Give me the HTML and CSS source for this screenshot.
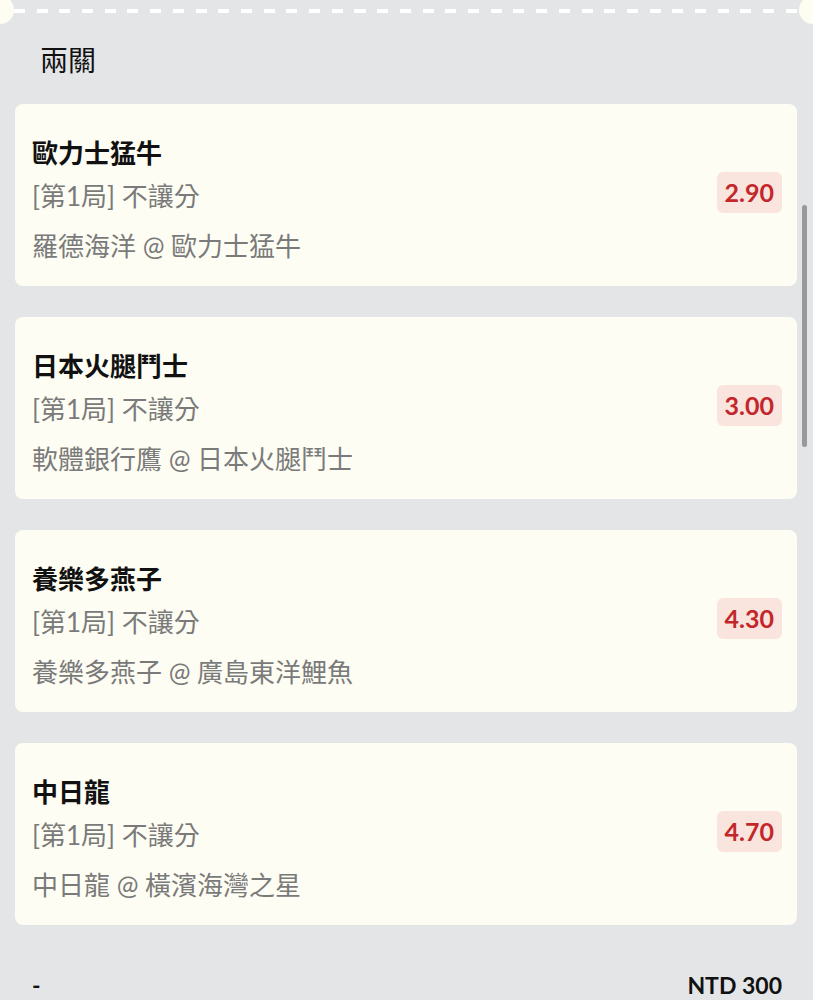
FILE: index.html
```html
<!DOCTYPE html>
<html lang="zh-Hant">
<head>
  <meta charset="UTF-8">
  <meta name="viewport" content="width=device-width, initial-scale=1.0">
  <title>投注單</title>
  <link rel="stylesheet" href="styles.css">
</head>
<body>
  <div class="ticket">
    <div class="tear"><div class="tear-line"></div></div>

    <h2 class="ticket-title">兩關</h2>

    <div class="bet-list">
      <div class="bet-item">
        <div class="bet-info">
          <div class="bet-pick">歐力士猛牛</div>
          <div class="bet-market">[第1局] 不讓分</div>
          <div class="bet-match">羅德海洋 @ 歐力士猛牛</div>
        </div>
        <div class="bet-odds">2.90</div>
      </div>

      <div class="bet-item">
        <div class="bet-info">
          <div class="bet-pick">日本火腿鬥士</div>
          <div class="bet-market">[第1局] 不讓分</div>
          <div class="bet-match">軟體銀行鷹 @ 日本火腿鬥士</div>
        </div>
        <div class="bet-odds">3.00</div>
      </div>

      <div class="bet-item">
        <div class="bet-info">
          <div class="bet-pick">養樂多燕子</div>
          <div class="bet-market">[第1局] 不讓分</div>
          <div class="bet-match">養樂多燕子 @ 廣島東洋鯉魚</div>
        </div>
        <div class="bet-odds">4.30</div>
      </div>

      <div class="bet-item">
        <div class="bet-info">
          <div class="bet-pick">中日龍</div>
          <div class="bet-market">[第1局] 不讓分</div>
          <div class="bet-match">中日龍 @ 橫濱海灣之星</div>
        </div>
        <div class="bet-odds">4.70</div>
      </div>
    </div>

    <div class="ticket-total">
      <span class="total-label">-</span>
      <span class="total-amount">NTD 300</span>
    </div>
  </div>

  <div class="scroll-thumb"></div>
</body>
</html>
```

FILE: styles.css
```css
html, body {
  overflow: hidden;
}

body {
  margin: 0;
  padding: 0;
  background-color: #e4e5e7;
  font-family: Lato, "Noto Sans CJK TC", sans-serif;
  color: #151515;
}

.ticket {
  padding: 0 16px 0 15px;
}

/* torn edge at the top of the ticket */
.tear {
  position: relative;
  height: 22px;
  margin: 0 -16px 0 -15px;
}

.tear::before,
.tear::after {
  content: "";
  position: absolute;
  top: -4px;
  width: 28px;
  height: 28px;
  border-radius: 50%;
  background-color: #fdfdf2;
}

.tear::before {
  left: -14px;
}

.tear::after {
  right: -14px;
}

.tear-line {
  position: relative;
  top: 9px;
  height: 4px;
  margin: 0 14px;
  background: repeating-linear-gradient(to right, #fff 0 11px, transparent 11px 22.7px);
}

.ticket-title {
  margin: 17px 0 25px 25px;
  font-family: "Noto Sans CJK TC", sans-serif;
  font-size: 28px;
  font-weight: 400;
  line-height: 40px;
  color: #111;
}

.bet-list {
  display: flex;
  flex-direction: column;
  gap: 31px;
}

.bet-item {
  display: flex;
  align-items: center;
  justify-content: space-between;
  padding: 30px 15px 14px 17px;
  background-color: #fdfdf3;
  border-radius: 8px;
}

.bet-info {
  font-size: 26px;
}

.bet-pick {
  font-weight: 700;
  line-height: 38px;
  color: #111;
}

.bet-market,
.bet-match {
  color: #7a7a7a;
  line-height: 48px;
}

.bet-match {
  line-height: 52px;
}

.bet-odds {
  margin-bottom: 22px;
  padding: 0 8px;
  line-height: 41px;
  font-size: 25px;
  font-weight: 700;
  color: #c3272b;
  background-color: #f9e5dd;
  border-radius: 6px;
}

.ticket-total {
  display: flex;
  justify-content: space-between;
  align-items: center;
  padding: 48px 15px 0 17px;
  font-size: 23px;
  font-weight: 700;
  line-height: 24px;
  color: #111;
}

.scroll-thumb {
  position: absolute;
  top: 205px;
  right: 6px;
  width: 5px;
  height: 242px;
  border-radius: 3px;
  background-color: #98999b;
}
```
